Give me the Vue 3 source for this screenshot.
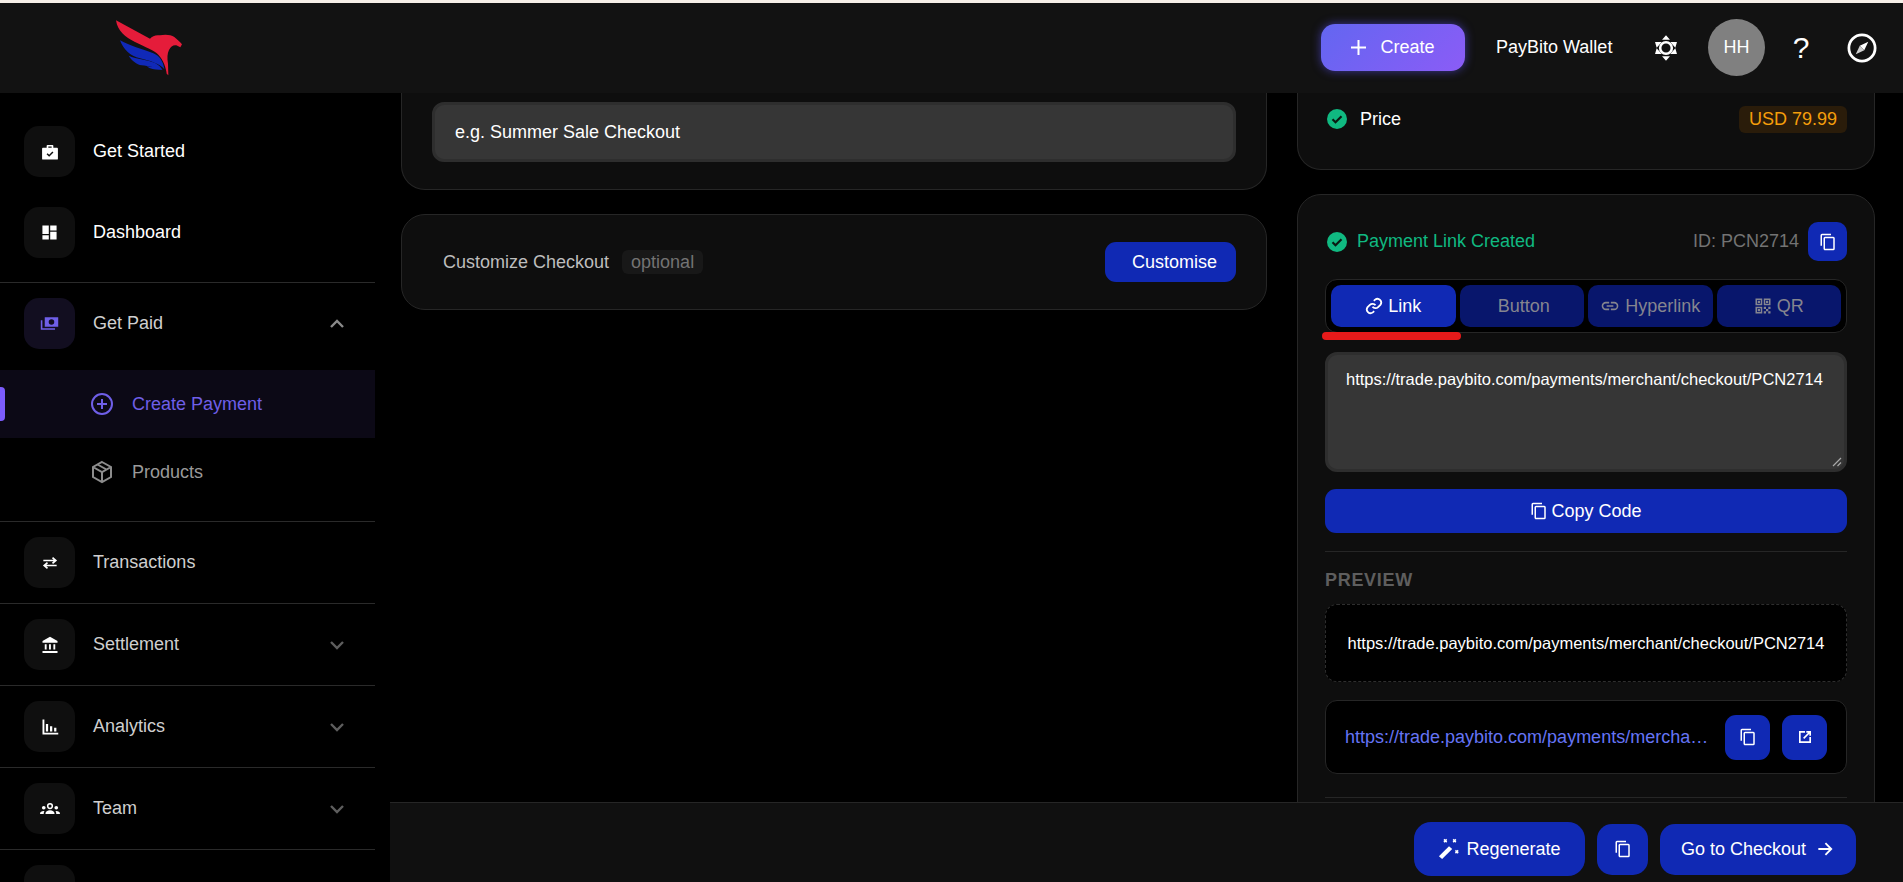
<script setup>
const mainNav = [
  { label: 'Transactions', icon: 'swap', chev: false },
  { label: 'Settlement', icon: 'bank', chev: true },
  { label: 'Analytics', icon: 'bars', chev: true },
  { label: 'Team', icon: 'team', chev: true },
  { label: '', icon: 'shield', chev: false },
]
const copyPath = 'M16 1H4a2 2 0 0 0-2 2v14h2V3h12V1zm3 4H8a2 2 0 0 0-2 2v14c0 1.1.9 2 2 2h11a2 2 0 0 0 2-2V7a2 2 0 0 0-2-2zm0 16H8V7h11v14z'
</script>

<template>
  <div class="page">
    <div class="strip"></div>
    <header class="topbar">
      <div class="logo">
        <svg viewBox="0 0 270 210" width="90" height="70">
          <path fill="#e51c3a" d="M33 25 L135 80 C142 72 152 68 165 70 C180 67 198 68 208 75 C216 82 224 88 231 97 L226 106 L214 100 C205 98 197 104 192 114 C187 124 186 138 189 155 L190 190 L185 185 C183 168 176 145 160 128 C150 116 120 105 90 90 C60 75 38 58 33 25Z"/>
          <path fill="#1029b8" d="M45 85 C70 100 115 112 145 124 C165 132 175 150 178 172 C165 156 135 146 105 139 C75 132 55 112 45 85Z"/>
          <path fill="#1029b8" d="M71 131 C95 142 130 143 150 153 C160 158 168 165 173 175 C155 165 130 163 110 160 C95 157 80 146 71 131Z"/>
          <path fill="#1029b8" d="M125 163 C138 166 155 163 166 168 L171 173 C155 174 138 173 125 163Z"/>
        </svg>
      </div>
      <div class="top-actions">
        <button class="create">
          <svg viewBox="0 0 15 15" width="15" height="15"><path stroke="#fff" stroke-width="2" d="M7.500 0v15M0 7.500h15"/></svg>
          <span>Create</span>
        </button>
        <span class="wallet">PayBito Wallet</span>
        <svg class="sun" viewBox="0 0 24 24" width="28" height="28"><path fill="#fff" d="M12 1.100 15.400 4.900H8.600zM12 22.900 8.600 19.100H15.400zM2.600 6.900H8.300L4 11.700zM21.400 6.900H15.700L20 11.700zM2.600 17.100H8.300L4 12.300zM21.400 17.100H15.700L20 12.300z"/><circle cx="12" cy="12" r="5" fill="none" stroke="#fff" stroke-width="2.200"/></svg>
        <div class="avatar">HH</div>
        <span class="help">?</span>
        <svg class="compass" viewBox="0 0 24 24" width="30" height="30"><circle cx="12" cy="12" r="10.500" fill="none" stroke="#fff" stroke-width="2.200"/><path fill="#fff" d="M17 7 13.800 13.800 10.200 10.200z"/><path fill="#cfcfcf" d="M7 17 10.200 10.200 13.800 13.800z"/></svg>
      </div>
    </header>

    <div class="body">
      <aside class="sidebar">
        <div class="nav-group first">
          <div class="nav-row">
            <div class="ico-box">
              <svg viewBox="0 0 24 24" width="20" height="20"><path fill="#fff" d="M9 3.500h6a1 1 0 0 1 1 1V7h4.500a1 1 0 0 1 1 1v12a1 1 0 0 1-1 1h-17a1 1 0 0 1-1-1V8a1 1 0 0 1 1-1H8V4.500a1 1 0 0 1 1-1zM10 5.500V7h4V5.500z"/><path fill="none" stroke="#111" stroke-width="1.800" d="m8.500 14 2.500 2.500 4.500-4.500"/></svg>
            </div>
            <span class="nav-label bright">Get Started</span>
          </div>
          <div class="nav-row">
            <div class="ico-box">
              <svg viewBox="0 0 24 24" width="17" height="17"><path fill="#fff" d="M2 2h9v12H2zM13 2h9v7h-9zM13 11h9v11h-9zM2 16h9v6H2z"/></svg>
            </div>
            <span class="nav-label bright">Dashboard</span>
          </div>
        </div>

        <div class="nav-group paid">
          <div class="nav-row">
            <div class="ico-box purple">
              <svg viewBox="0 0 24 24" width="19" height="19"><path fill="#6f5fe8" d="M6 4h17v12H6zm8.500 2.500a3.500 3.500 0 1 0 0 7 3.500 3.500 0 0 0 0-7z"/><path fill="none" stroke="#6f5fe8" stroke-width="2" d="M2 8v11h17"/></svg>
            </div>
            <span class="nav-label">Get Paid</span>
            <svg class="chev" viewBox="0 0 24 24" width="24" height="24"><path fill="none" stroke="#8a8a8a" stroke-width="2.400" d="m6 15 6-6 6 6"/></svg>
          </div>
          <div class="sub-row active">
            <span class="indicator"></span>
            <svg viewBox="0 0 24 24" width="24" height="24"><circle cx="12" cy="12" r="10" fill="none" stroke="#6f5fe8" stroke-width="2"/><path stroke="#6f5fe8" stroke-width="2" d="M12 7v10M7 12h10"/></svg>
            <span>Create Payment</span>
          </div>
          <div class="sub-row">
            <svg viewBox="0 0 24 24" width="24" height="24"><path fill="none" stroke="#8c8c8c" stroke-width="2" d="M12 2 21 7v10l-9 5-9-5V7zM3 7l9 5 9-5M12 12v10M7.500 4.500l9 5"/></svg>
            <span>Products</span>
          </div>
        </div>

        <div v-for="item in mainNav" :key="item.icon" class="nav-group single">
          <div class="nav-row">
            <div class="ico-box">
              <svg v-if="item.icon === 'swap'" viewBox="0 0 24 24" width="20" height="20"><path fill="none" stroke="#fff" stroke-width="2" d="M4 9h14M15 5.500 19 9l-4 3.500"/><path fill="none" stroke="#fff" stroke-width="2" d="M20 15H6M9 11.500 5 15l4 3.500"/></svg>
              <svg v-else-if="item.icon === 'bank'" viewBox="0 0 24 24" width="18" height="18"><path fill="#fff" d="M12 1 22 6.500V9H2V6.500zM5 11h2.500v7H5zM10.700 11h2.500v7h-2.500zM16.500 11H19v7h-2.500zM2 20h20v2.500H2z"/></svg>
              <svg v-else-if="item.icon === 'bars'" viewBox="0 0 24 24" width="18" height="18"><path fill="#fff" d="M2 2h2.500v17.500H23V22H2zM6.500 8h3v10h-3zM12 11h3v7h-3zM17.500 13h3v5h-3z"/></svg>
              <svg v-else-if="item.icon === 'team'" viewBox="0 0 24 24" width="20" height="20"><circle cx="12" cy="8.500" r="2.800" fill="none" stroke="#fff" stroke-width="1.800"/><circle cx="4.500" cy="10.500" r="2.200" fill="#fff"/><circle cx="19.500" cy="10.500" r="2.200" fill="#fff"/><path fill="#fff" d="M6.500 18c0-3 2.500-4.500 5.500-4.500s5.500 1.500 5.500 4.500zM0 18c0-2.500 2-3.500 4.500-3.500l1 .3C4.500 15.500 4.500 17 4.500 18zM24 18c0-2.500-2-3.500-4.500-3.500l-1 .3c1 .7 1 2.200 1 3.200z"/></svg>
              <svg v-else viewBox="0 0 24 24" width="20" height="20"><path fill="#fff" d="M12 2 20 5v6c0 5-3.500 9-8 11-4.500-2-8-6-8-11V5z"/></svg>
            </div>
            <span v-if="item.label" class="nav-label">{{ item.label }}</span>
            <svg v-if="item.chev" class="chev" viewBox="0 0 24 24" width="24" height="24"><path fill="none" stroke="#5e5e5e" stroke-width="2.400" d="m6 9 6 6 6-6"/></svg>
          </div>
        </div>
      </aside>

      <main class="center">
        <section class="card title-card">
          <div class="fake-input">e.g. Summer Sale Checkout</div>
        </section>
        <section class="card custom-card">
          <span class="custom-title">Customize Checkout</span>
          <span class="optional">optional</span>
          <button class="customise">Customise</button>
        </section>
      </main>

      <div class="right">
        <section class="card price-card">
          <svg class="ok" viewBox="0 0 20 20" width="20" height="20"><circle cx="10" cy="10" r="10" fill="#10b981"/><path fill="none" stroke="#0a1a12" stroke-width="2.200" d="m5.500 10.200 3 3 6-6"/></svg>
          <span class="price-label">Price</span>
          <span class="price-tag">USD 79.99</span>
        </section>

        <section class="card link-card">
          <div class="link-head">
            <svg class="ok" viewBox="0 0 20 20" width="20" height="20"><circle cx="10" cy="10" r="10" fill="#10b981"/><path fill="none" stroke="#0a1a12" stroke-width="2.200" d="m5.500 10.200 3 3 6-6"/></svg>
            <span class="created">Payment Link Created</span>
            <span class="pid">ID: PCN2714</span>
            <button class="icon-btn head-copy"><svg viewBox="0 0 24 24" width="18" height="18"><path fill="#fff" :d="copyPath"/></svg></button>
          </div>

          <div class="tabs-wrap">
            <div class="tabs">
              <button class="tab on">
                <svg viewBox="0 0 24 24" width="18" height="18"><path fill="none" stroke="#fff" stroke-width="2.400" d="M10 13a5 5 0 0 0 7.500.5l3-3a5 5 0 0 0-7-7l-1.700 1.700"/><path fill="none" stroke="#fff" stroke-width="2.400" d="M14 11a5 5 0 0 0-7.500-.5l-3 3a5 5 0 0 0 7 7l1.700-1.700"/></svg>
                Link
              </button>
              <button class="tab plain">Button</button>
              <button class="tab">
                <svg viewBox="0 0 24 24" width="20" height="20"><path fill="#85858f" d="M3.900 12c0-1.700 1.400-3.100 3.100-3.100h4V7H7a5 5 0 0 0 0 10h4v-1.900H7c-1.700 0-3.100-1.400-3.100-3.100zM8 13h8v-2H8zm9-6h-4v1.900h4a3.100 3.100 0 0 1 0 6.200h-4V17h4a5 5 0 0 0 0-10z"/></svg>
                Hyperlink
              </button>
              <button class="tab">
                <svg viewBox="0 0 24 24" width="18" height="18"><path fill="#85858f" d="M2 2h9v9H2zm2 2v5h5V4zm1 1h3v3H5zM13 2h9v9h-9zm2 2v5h5V4zm1 1h3v3h-3zM2 13h9v9H2zm2 2v5h5v-5zm1 1h3v3H5zM13 13h3v3h-3zM19 13h3v3h-3zM16 16h3v3h-3zM13 19h3v3h-3zM19 19h3v3h-3z"/></svg>
                QR
              </button>
            </div>
            <span class="red-mark"></span>
          </div>

          <div class="code-box">https://trade.paybito.com/payments/merchant/checkout/PCN2714
            <svg class="grip" viewBox="0 0 10 10" width="10" height="10"><path stroke="#a8a8a8" stroke-width="1.200" d="M9 1 1 9M9 5.500 5.500 9"/></svg>
          </div>

          <button class="copy-code"><svg viewBox="0 0 24 24" width="18" height="18"><path fill="#fff" :d="copyPath"/></svg>Copy Code</button>

          <div class="rule"></div>
          <div class="preview-label">PREVIEW</div>
          <div class="preview-box">https://trade.paybito.com/payments/merchant/checkout/PCN2714</div>

          <div class="url-box">
            <span class="url-text">https://trade.paybito.com/payments/merchant/checkout/PCN2714</span>
            <button class="icon-btn url-btn"><svg viewBox="0 0 24 24" width="18" height="18"><path fill="#fff" :d="copyPath"/></svg></button>
            <button class="icon-btn url-btn"><svg viewBox="0 0 24 24" width="16" height="16"><path fill="#fff" d="M3 3h9v2.500H5.500v13h13V12H21v9H3zM14 3h7v7h-2.500V7.300l-7.600 7.600-1.800-1.800 7.600-7.600H14z"/></svg></button>
          </div>
          <div class="rule lower"></div>
        </section>
      </div>
    </div>

    <footer class="footbar">
      <button class="foot-btn regen">
        <svg viewBox="0 0 24 24" width="22" height="22"><path fill="#fff" d="M1 20 12 9l3.500 3L4.500 23z"/><path fill="none" stroke="#fff" stroke-width="1.600" d="M6.500 1.500l3 3m0-3l-3 3M16.500 1.500l3 3m0-3l-3 3M19 13.500l3 3m0-3l-3 3"/></svg>
        Regenerate
      </button>
      <button class="foot-btn square"><svg viewBox="0 0 24 24" width="18" height="18"><path fill="#fff" :d="copyPath"/></svg></button>
      <button class="foot-btn go">
        Go to Checkout
        <svg viewBox="0 0 24 24" width="20" height="20"><path fill="none" stroke="#fff" stroke-width="2.200" d="M4 12h15M12.500 5l7 7-7 7"/></svg>
      </button>
    </footer>
  </div>
</template>

<style>
html, body { margin: 0; background: #000; overflow: hidden; }
</style>

<style scoped>
.page {
  position: relative;
  width: 1903px;
  height: 882px;
  overflow: hidden;
  background: #000;
  color: #fff;
  font-family: "Liberation Sans", Arial, sans-serif;
  font-size: 18px;
}
button { font-family: inherit; border: 0; color: #fff; cursor: pointer; }
.strip { height: 3px; background: #f5efe8; }
.topbar {
  height: 90px;
  background: #121212;
  display: flex;
  align-items: center;
  justify-content: space-between;
}
.logo { display: flex; margin-left: 105px; margin-top: -2px; }
.top-actions { display: flex; align-items: center; margin-top: -1px; }
.create {
  width: 144px;
  height: 47px;
  display: flex;
  align-items: center;
  justify-content: center;
  gap: 14px;
  border-radius: 14px;
  font-size: 18px;
  background: linear-gradient(135deg, #6366f1, #8b5cf6);
  box-shadow: 0 0 10px rgba(90, 80, 240, .6);
}
.wallet { margin-left: 31px; font-size: 18px; width: 116px; white-space: nowrap; }
.sun { margin-left: 40px; }
.avatar {
  margin-left: 28px;
  width: 57px;
  height: 57px;
  border-radius: 50%;
  background: #808080;
  display: flex;
  align-items: center;
  justify-content: center;
  font-size: 18px;
}
.help { margin-left: 26px; font-size: 30px; width: 20px; text-align: center; }
.compass { margin-left: 36px; margin-right: 26px; }

.body { display: flex; height: 789px; }
.sidebar { width: 375px; flex: none; margin-right: 26px; overflow: hidden; }
.nav-group { border-bottom: 1px solid #2a2a2a; }
.nav-group.first { padding: 33px 0 24px; display: flex; flex-direction: column; gap: 30px; }
.nav-group.paid { padding: 15px 0 0; height: 239px; box-sizing: border-box; }
.nav-group.single { padding: 15px 0; height: 82px; box-sizing: border-box; }
.nav-row { display: flex; align-items: center; padding-left: 24px; height: 51px; }
.ico-box {
  width: 51px;
  height: 51px;
  border-radius: 15px;
  background: #0f0f0f;
  display: flex;
  align-items: center;
  justify-content: center;
  flex: none;
}
.ico-box.purple { background: #120e20; }
.nav-label { margin-left: 18px; font-size: 18px; color: #cfcfcf; flex: 1; }
.nav-label.bright { color: #fff; }
.chev { margin-right: 26px; }
.sub-row {
  position: relative;
  height: 68px;
  display: flex;
  align-items: center;
  gap: 18px;
  padding-left: 90px;
  font-size: 18px;
  color: #9a9a9a;
}
.sub-row.active { margin-top: 21px; background: #0c0916; color: #6f5fe8; }
.indicator {
  position: absolute;
  left: 0;
  top: 17px;
  width: 5px;
  height: 34px;
  border-radius: 0 4px 4px 0;
  background: #7c5cfc;
}

.center { width: 866px; flex: none; margin-right: 30px; }
.card {
  background: #0e0e0e;
  border: 1px solid #262626;
  border-radius: 24px;
  box-sizing: border-box;
}
.title-card {
  height: 97px;
  border-top: 0;
  border-radius: 0 0 24px 24px;
  padding: 9px 30px 0;
}
.fake-input {
  height: 60px;
  box-sizing: border-box;
  background: #363636;
  border: 3px solid #2e2e2e;
  border-radius: 12px;
  padding: 0 20px;
  line-height: 54px;
  font-size: 18px;
}
.custom-card {
  margin-top: 24px;
  height: 96px;
  display: flex;
  align-items: center;
  padding: 0 30px 0 41px;
}
.custom-title { font-size: 18px; color: #bdbdbd; }
.optional {
  margin-left: 13px;
  padding: 0 9px;
  height: 24px;
  line-height: 24px;
  border-radius: 6px;
  background: #181818;
  color: #737373;
  font-size: 18px;
}
.customise {
  margin-left: auto;
  width: 131px;
  height: 40px;
  border-radius: 11px;
  background: #1029b4;
  font-size: 18px;
  padding: 0 0 0 8px;
}

.right { width: 578px; flex: none; }
.price-card {
  height: 77px;
  border-top: 0;
  border-radius: 0 0 24px 24px;
  padding: 0 27px 24px;
  display: flex;
  align-items: center;
}
.ok { flex: none; margin-left: 2px; }
.price-label { margin-left: 13px; font-size: 18px; }
.price-tag {
  margin-left: auto;
  padding: 0 10px;
  height: 27px;
  line-height: 27px;
  border-radius: 6px;
  background: #2a1c0a;
  color: #f59e0b;
  font-size: 18px;
}
.link-card { margin-top: 24px; padding: 27px 27px 0; height: 760px; }
.link-head { display: flex; align-items: center; height: 39px; }
.created { margin-left: 10px; color: #10b981; font-size: 18px; }
.pid { margin-left: auto; color: #737373; font-size: 18px; }
.icon-btn {
  background: #1029b4;
  display: flex;
  align-items: center;
  justify-content: center;
  padding: 0;
}
.head-copy { margin-left: 9px; width: 39px; height: 39px; border-radius: 10px; }
.tabs-wrap { position: relative; margin-top: 18px; }
.tabs {
  height: 54px;
  box-sizing: border-box;
  background: #000;
  border: 1px solid #262626;
  border-radius: 12px;
  padding: 5px;
  display: grid;
  grid-template-columns: repeat(4, 1fr);
  gap: 4px;
}
.tab {
  border-radius: 10px;
  background: #08166c;
  color: #85858f;
  font-size: 18px;
  display: flex;
  align-items: center;
  justify-content: center;
  gap: 5px;
  padding: 0;
}
.tab.plain { padding-left: 4px; }
.tab.on { background: #1029b4; color: #fff; }
.red-mark {
  position: absolute;
  left: -3px;
  top: 53px;
  width: 139px;
  height: 8px;
  border-radius: 4px;
  background: #e61a1a;
}
.code-box {
  position: relative;
  margin-top: 19px;
  height: 120px;
  box-sizing: border-box;
  background: #363636;
  border: 3px solid #2e2e2e;
  border-radius: 12px;
  padding: 15px 18px;
  font-size: 16.500px;
  white-space: nowrap;
}
.grip { position: absolute; right: 2px; bottom: 2px; }
.copy-code {
  margin-top: 17px;
  width: 100%;
  height: 44px;
  border-radius: 11px;
  background: #1029b4;
  font-size: 18px;
  display: flex;
  align-items: center;
  justify-content: center;
  gap: 3px;
}
.rule { margin-top: 18px; border-top: 1px solid #262626; }
.preview-label { margin-top: 18px; color: #5e5e5e; font-size: 18px; font-weight: 700; letter-spacing: .7px; line-height: 20px; }
.preview-box {
  margin-top: 14px;
  height: 78px;
  box-sizing: border-box;
  background: #000;
  border: 1px dashed #2e2e2e;
  border-radius: 12px;
  display: flex;
  align-items: center;
  justify-content: center;
  font-size: 16.500px;
  white-space: nowrap;
}
.url-box {
  margin-top: 18px;
  height: 74px;
  box-sizing: border-box;
  background: #000;
  border: 1px solid #262626;
  border-radius: 12px;
  display: flex;
  align-items: center;
  padding: 0 18px 0 19px;
}
.url-text {
  width: 367px;
  margin-right: 13px;
  overflow: hidden;
  text-overflow: ellipsis;
  white-space: nowrap;
  color: #6574f5;
  font-size: 18px;
}
.url-btn { width: 45px; height: 45px; border-radius: 11px; flex: none; }
.url-btn + .url-btn { margin-left: 12px; }
.rule.lower { margin-top: 23px; }

.footbar {
  position: absolute;
  left: 390px;
  right: 0;
  bottom: 0;
  height: 80px;
  box-sizing: border-box;
  background: #101010;
  border-top: 1px solid #262626;
  display: flex;
  align-items: center;
  justify-content: flex-end;
  gap: 12px;
  padding: 13px 47px 0 0;
}
.foot-btn {
  height: 51px;
  background: #1029b4;
  border-radius: 15px;
  font-size: 18px;
  display: flex;
  align-items: center;
  justify-content: center;
  gap: 6px;
  padding: 0;
}
.regen { width: 171px; height: 54px; border-radius: 17px; }
.square { width: 51px; }
.go { width: 196px; gap: 9px; }
</style>
